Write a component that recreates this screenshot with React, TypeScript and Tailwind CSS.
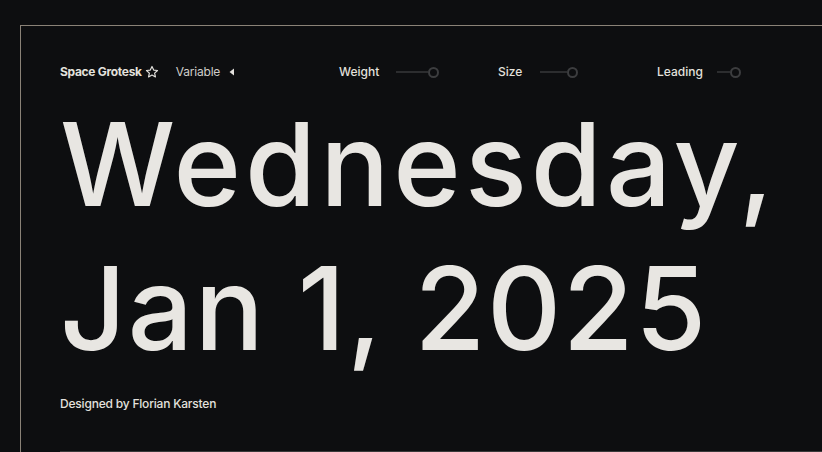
import React from "react";

// slider control in the toolbar
const Slider = ({ label, track, width }: { label: string; track: number; width: number }) => (
  <div className="flex items-center" style={{ width }}>
    <span className="text-[12px] font-medium text-[#e3e1dd]">{label}</span>
    <div className="ml-auto flex items-center">
      <div className="h-[2px] bg-[#2c2d2f]" style={{ width: track }} />
      <div className="h-[11px] w-[11px] rounded-full border-2 border-[#3c3d3f]" />
    </div>
  </div>
);

const App: React.FC = () => {
  return (
    <div
      className="h-[452px] w-full overflow-hidden bg-[#0d0e10] pl-[20px] pt-[25px]"
      style={{ fontFamily: "Inter, 'Liberation Sans', sans-serif" }}
    >
      <div className="h-full border-l border-t border-[#8a8277] pl-[39px] pt-[36px]">
        {/* toolbar */}
        <div className="flex h-[20px] items-center">
          <div className="flex w-[279px] items-center">
            <span className="text-[12px] font-bold tracking-[-0.3px] text-[#e3e1dd]">Space Grotesk</span>
            <svg className="ml-[3px]" width="14" height="14" viewBox="0 0 24 24" fill="none" stroke="#e3e1dd" strokeWidth="2" strokeLinejoin="round">
              <path d="M12 2.5l2.9 6.2 6.6.7-5 4.5 1.4 6.6L12 17.1l-5.9 3.4 1.4-6.6-5-4.5 6.6-.7z" />
            </svg>
            <span className="ml-[17px] text-[12px] tracking-[-0.2px] text-[#cfcdc9]">Variable</span>
            <svg className="ml-[9px]" width="6" height="8" viewBox="0 0 6 8">
              <path d="M5 0.5v7L0.5 4z" fill="#e3e1dd" />
            </svg>
          </div>
          <Slider label="Weight" track={32} width={100} />
          <div className="w-[59px]" />
          <Slider label="Size" track={27} width={80} />
          <div className="w-[79px]" />
          <Slider label="Leading" track={13} width={84} />
        </div>

        {/* specimen */}
        <div className="mt-[11px] text-[115px] font-medium leading-[144px] text-[#e8e6e2]">
          <div className="tracking-[4px]">Wednesday,</div>
          <div className="tracking-[1.6px]">Jan 1, 2025</div>
        </div>

        <div className="mt-[15px] text-[12px] leading-[16px] font-medium tracking-[-0.2px] text-[#e3e1dd]">
          Designed by Florian Karsten
        </div>
        <div className="mt-[39px] h-[1px] bg-[#3a3a3a]" />
      </div>
    </div>
  );
};

export default App;
